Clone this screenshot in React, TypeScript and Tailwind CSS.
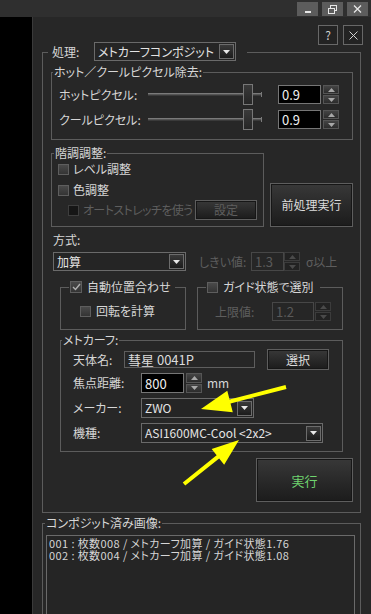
import React from "react";

// dark "StellaImage"-style composite dialog

const txt = "text-[12px] leading-[14px] text-[#d6d6d6] whitespace-nowrap";
const dim = "text-[12px] leading-[14px] text-[#5e5e5e] whitespace-nowrap";

function Group({
  head,
  corner,
  children,
  className = "",
  bodyClass = "",
  headClass = "h-[14px]",
  topClass = "h-[7px]",
}: {
  head: React.ReactNode;
  corner: string;
  children: React.ReactNode;
  className?: string;
  bodyClass?: string;
  headClass?: string;
  topClass?: string;
}) {
  return (
    <div className={`flex flex-col ${className}`}>
      <div className={`flex items-stretch ${headClass}`}>
        <div className={`flex flex-col ${corner}`}>
          <div className={topClass} />
          <div className="flex-1 border-l border-t border-[#5c5c5c]" />
        </div>
        {head}
        <div className="flex flex-1 flex-col">
          <div className={topClass} />
          <div className="flex-1 border-r border-t border-[#5c5c5c]" />
        </div>
      </div>
      <div className={`border-x border-b border-[#5c5c5c] ${bodyClass}`}>{children}</div>
    </div>
  );
}

function Check({ checked = false, disabled = false, big = false }: { checked?: boolean; disabled?: boolean; big?: boolean }) {
  return (
    <div
      className={`flex shrink-0 items-center justify-center border ${big ? "h-[12px] w-[12px]" : "h-[11px] w-[11px]"} ${
        disabled ? "border-[#3e3e3e] bg-[#161616]" : "border-[#5e5e5e] bg-gradient-to-b from-[#4a4a4a] to-[#343434]"
      }`}
    >
      {checked && (
        <svg width="9" height="8" viewBox="0 0 9 8">
          <path d="M1 4 L3.5 6.5 L8 1" stroke="#b0b0b0" strokeWidth="1.4" fill="none" />
        </svg>
      )}
    </div>
  );
}

function Tri({ up = false, color = "#e8e8e8" }: { up?: boolean; color?: string }) {
  return (
    <svg width="7" height="4" viewBox="0 0 7 4">
      <polygon points={up ? "0,4 7,4 3.5,0" : "0,0 7,0 3.5,4"} fill={color} />
    </svg>
  );
}

function Combo({ text, className }: { text: string; className: string }) {
  return (
    <div className={`flex items-center border border-[#6a6a6a] bg-[#252525] pr-[1px] ${className}`}>
      <span className="flex-1 whitespace-nowrap pl-[3px] text-[12px] leading-[16px] text-[#e4e4e4]">{text}</span>
      <div className="flex h-[15px] w-[15px] shrink-0 items-center justify-center border border-[#6c6c6c] bg-gradient-to-b from-[#3a3a3a] to-[#1c1c1c]">
        <Tri />
      </div>
    </div>
  );
}

function Spin({ disabled = false, className = "h-[19px]" }: { disabled?: boolean; className?: string }) {
  const c = disabled ? "border-[#3c3c3c] bg-[#222]" : "border-[#555] bg-gradient-to-b from-[#444] to-[#2c2c2c]";
  const t = disabled ? "#4a4a4a" : "#a8a8a8";
  return (
    <div className={`flex w-[16px] flex-col gap-[1px] ${className}`}>
      <div className={`flex flex-1 items-center justify-center border ${c}`}>
        <Tri up color={t} />
      </div>
      <div className={`flex flex-1 items-center justify-center border ${c}`}>
        <Tri color={t} />
      </div>
    </div>
  );
}

function Field({ value, className, disabled = false, black = true }: { value: string; className: string; disabled?: boolean; black?: boolean }) {
  return (
    <div
      className={`flex items-center whitespace-nowrap border pl-[3px] text-[13px] leading-[15px] ${className} ${
        disabled
          ? "border-[#474747] bg-[#262626] text-[#5a5a5a]"
          : black
          ? "border-[#767676] bg-black text-[#f0f0f0]"
          : "border-[#5e5e5e] bg-[#262626] text-[#dcdcdc]"
      }`}
    >
      {value}
    </div>
  );
}

function Btn({ children, className, tone = "text-[#dcdcdc]" }: { children: React.ReactNode; className: string; tone?: string }) {
  return (
    <div
      className={`flex shrink-0 items-center justify-center border border-[#5e5e5e] bg-gradient-to-b from-[#383838] to-[#1c1c1c] shadow-[inset_0_0_0_1px_#161616] ${tone} ${className}`}
    >
      {children}
    </div>
  );
}

function Slider() {
  return (
    <div className="relative flex h-[21px] w-[114px] items-center">
      <div className="h-[3px] flex-1 border-t border-b border-t-[#7a7a7a] border-b-[#3a3a3a] bg-[#555]" />
      <div className="h-[5px] w-[1px] self-center bg-[#7a7a7a]" />
      <div className="absolute left-[95px] top-0 h-[21px] w-[10px] border border-[#777] bg-gradient-to-b from-[#3a3a3a] to-[#262626]" />
    </div>
  );
}

function arrowPts(x1: number, y1: number, x2: number, y2: number, hl: number, hw: number, sw: number) {
  const L = Math.hypot(x2 - x1, y2 - y1);
  const ux = (x2 - x1) / L;
  const uy = (y2 - y1) / L;
  const nx = -uy;
  const ny = ux;
  const bx = x2 - ux * hl;
  const by = y2 - uy * hl;
  const p = [
    [x1 + (nx * sw) / 2, y1 + (ny * sw) / 2],
    [bx + (nx * sw) / 2, by + (ny * sw) / 2],
    [bx + (nx * hw) / 2, by + (ny * hw) / 2],
    [x2, y2],
    [bx - (nx * hw) / 2, by - (ny * hw) / 2],
    [bx - (nx * sw) / 2, by - (ny * sw) / 2],
    [x1 - (nx * sw) / 2, y1 - (ny * sw) / 2],
  ];
  return p.map((q) => q.join(",")).join(" ");
}

export default function App() {
  return (
    <div className="relative flex h-[614px] w-[371px] flex-col overflow-hidden bg-black font-['Noto_Sans_CJK_JP','Noto_Sans',sans-serif] [font-feature-settings:'palt']">
      {/* title bar */}
      <div className="flex h-[17px] shrink-0 items-start justify-end gap-[4px] bg-[#2f2f2f] pr-[3px] pt-[2px]">
        <div className="flex h-[14px] w-[21px] items-end justify-center bg-[#5c5c5c] pb-[3px]">
          <div className="h-[2px] w-[6px] bg-[#e6e6e6]" />
        </div>
        <div className="flex h-[14px] w-[21px] items-center justify-center bg-[#5c5c5c]">
          <svg width="9" height="9" viewBox="0 0 9 9">
            <rect x="2.5" y="0.5" width="6" height="5" stroke="#e6e6e6" fill="none" />
            <rect x="0.5" y="3.5" width="6" height="5" stroke="#e6e6e6" fill="#5c5c5c" />
          </svg>
        </div>
        <div className="flex h-[14px] w-[21px] items-center justify-center bg-[#5c5c5c]">
          <svg width="9" height="8" viewBox="0 0 9 8">
            <path d="M1 0.5 L8 7.5 M8 0.5 L1 7.5" stroke="#e6e6e6" strokeWidth="1.3" />
          </svg>
        </div>
      </div>

      <div className="flex flex-1">
        <div className="w-[32px] shrink-0 bg-black" />
        <div className="flex flex-1 flex-col border-l border-[#3a3a3a] bg-[#272727]">
          {/* help / close */}
          <div className="flex justify-end gap-[5px] pr-[8px] pt-[8px]">
            <div className="flex h-[20px] w-[20px] items-center justify-center border border-[#686868] bg-[#232323] text-[12px] leading-none text-[#cfcfcf]">
              ?
            </div>
            <div className="flex h-[20px] w-[20px] items-center justify-center border border-[#686868] bg-[#232323]">
              <svg width="9" height="9" viewBox="0 0 9 9">
                <path d="M0.5 0.5 L8.5 8.5 M8.5 0.5 L0.5 8.5" stroke="#cfcfcf" strokeWidth="1" />
              </svg>
            </div>
          </div>

          {/* 処理 */}
          <Group
            className="-mt-[3px] ml-[9px] mr-[10px]"
            corner="w-[6px]"
            headClass="h-[19px]"
            topClass="h-[10px]"
            bodyClass="pl-[8px] pr-[7px] pb-[10px]"
            head={
              <div className="flex items-center">
                <span className={`ml-[4px] w-[42px] ${txt}`}>処理:</span>
                <Combo text="メトカーフコンポジット" className="h-[19px] w-[142px]" />
                <div className="w-[11px]" />
              </div>
            }
          >
            {/* hot / cool */}
            <Group
              className="mt-[4px]"
              corner="w-[2px]"
              bodyClass="pl-[7px] pt-[5px] pb-[9px] flex flex-col gap-[4px]"
              head={<span className={`pl-[1px] pr-[1px] ${txt}`}>ホット／クールピクセル除去:</span>}
            >
              {["ホットピクセル:", "クールピクセル:"].map((l) => (
                <div key={l} className="flex h-[21px] items-center">
                  <span className={`w-[89px] ${txt}`}>{l}</span>
                  <Slider />
                  <Field value="0.9" className="ml-[16px] h-[19px] w-[43px]" />
                  <div className="ml-[2px]">
                    <Spin />
                  </div>
                </div>
              ))}
            </Group>

            {/* 階調調整 + 前処理実行 */}
            <div className="mt-[6px] flex items-end gap-[6px]">
              <Group
                className="w-[213px]"
                corner="w-[3px]"
                bodyClass="flex flex-col pt-[2px] pb-[6px] pl-[6px] pr-[6px]"
                head={<span className={`pl-[1px] pr-[1px] ${txt}`}>階調調整:</span>}
              >
                <div className="flex h-[14px] items-center gap-[4px]">
                  <Check />
                  <span className={txt}>レベル調整</span>
                </div>
                <div className="mt-[7px] flex h-[14px] items-center gap-[4px]">
                  <Check />
                  <span className={txt}>色調整</span>
                </div>
                <div className="mt-[3px] flex h-[20px] items-center pl-[10px]">
                  <Check disabled />
                  <span className={`ml-[4px] tracking-[-0.6px] ${dim}`}>オートストレッチを使う</span>
                  <Btn className="ml-auto h-[20px] w-[62px]" tone="text-[#5e5e5e]">
                    <span className="text-[12px] leading-none">設定</span>
                  </Btn>
                </div>
              </Group>
              <Btn className="h-[44px] w-[83px]">
                <span className="text-[12px] leading-none">前処理実行</span>
              </Btn>
            </div>

            {/* 方式 */}
            <div className="ml-[2px] mt-[6px] flex flex-col">
              <span className={txt}>方式:</span>
              <div className="mt-[5px] flex h-[19px] items-center">
                <Combo text="加算" className="h-[19px] w-[133px]" />
                <span className={`ml-[13px] w-[52px] ${dim}`}>しきい値:</span>
                <Field value="1.3" disabled className="h-[19px] w-[33px]" />
                <Spin disabled className="h-[19px]" />
                <span className={`ml-[6px] ${dim}`}>σ以上</span>
              </div>
            </div>

            {/* 自動位置合わせ / ガイド */}
            <div className="ml-[9px] mt-[9px] flex items-stretch gap-[11px]">
              <Group
                className="w-[126px]"
                corner="w-[9px]"
                bodyClass="h-[36px] pl-[19px] pt-[10px]"
                head={
                  <div className="flex items-center gap-[5px] pl-[1px] pr-[4px]">
                    <Check checked big />
                    <span className={txt}>自動位置合わせ</span>
                  </div>
                }
              >
                <div className="flex h-[14px] items-center gap-[5px]">
                  <Check />
                  <span className={txt}>回転を計算</span>
                </div>
              </Group>
              <Group
                className="w-[146px]"
                corner="w-[9px]"
                bodyClass="h-[36px] pl-[17px] pt-[8px]"
                head={
                  <div className="flex items-center gap-[5px] pl-[1px] pr-[6px]">
                    <Check />
                    <span className={txt}>ガイド状態で選別</span>
                  </div>
                }
              >
                <div className="flex h-[19px] items-center">
                  <span className={`w-[57px] ${dim}`}>上限値:</span>
                  <Field value="1.2" disabled className="h-[19px] w-[42px]" />
                  <div className="ml-[1px]">
                    <Spin disabled />
                  </div>
                </div>
              </Group>
            </div>

            {/* メトカーフ */}
            <Group
              className="ml-[9px] mt-[3px] w-[283px]"
              corner="w-[2px]"
              bodyClass="flex flex-col pl-[12px] pt-[2px] pb-[8px]"
              head={<span className={`pl-[1px] pr-[1px] ${txt}`}>メトカーフ:</span>}
            >
              <div className="flex h-[21px] items-center">
                <span className={`w-[51px] ${txt}`}>天体名:</span>
                <Field value="彗星 0041P" black={false} className="h-[17px] w-[131px] text-[12px]" />
                <Btn className="ml-[12px] h-[21px] w-[62px]">
                  <span className="text-[12px] leading-none">選択</span>
                </Btn>
              </div>
              <div className="mt-[3px] flex h-[20px] items-center">
                <span className={`w-[68px] ${txt}`}>焦点距離:</span>
                <Field value="800" className="h-[20px] w-[43px]" />
                <div className="ml-[2px]">
                  <Spin className="h-[20px]" />
                </div>
                <span className={`ml-[5px] ${txt}`}>mm</span>
              </div>
              <div className="mt-[5px] flex h-[20px] items-center">
                <span className={`w-[68px] ${txt}`}>メーカー:</span>
                <Combo text="ZWO" className="h-[20px] w-[113px]" />
              </div>
              <div className="mt-[5px] flex h-[20px] items-center">
                <span className={`w-[68px] ${txt}`}>機種:</span>
                <Combo text="ASI1600MC-Cool <2x2>" className="h-[20px] w-[182px]" />
              </div>
            </Group>

            <div className="mt-[6px] flex justify-end">
              <Btn className="h-[44px] w-[97px]" tone="text-[#6fd46f]">
                <span className="text-[13px] leading-none">実行</span>
              </Btn>
            </div>
          </Group>

          {/* コンポジット済み画像 */}
          <Group
            className="ml-[9px] mr-[10px] mt-[3px]"
            corner="w-[3px]"
            bodyClass="pl-[3px] pr-[5px] pt-[5px]"
            head={<span className={`pl-[1px] pr-[1px] ${txt}`}>コンポジット済み画像:</span>}
          >
            <div className="h-[120px] border border-[#6a6a6a] bg-[#252525] pl-[2px] pt-[1px] text-[11px] leading-[12px] tracking-[0.4px] text-[#d6d6d6]">
              <div className="whitespace-nowrap">001 : 枚数008 / メトカーフ加算 / ガイド状態1.76</div>
              <div className="whitespace-nowrap">002 : 枚数004 / メトカーフ加算 / ガイド状態1.08</div>
            </div>
          </Group>
        </div>
      </div>

      {/* yellow annotation arrows */}
      <svg className="pointer-events-none absolute left-0 top-0" width="371" height="614">
        <polygon points={arrowPts(286, 387, 201, 409, 30, 22, 4)} fill="#ffff00" />
        <polygon points={arrowPts(184, 484, 239, 440, 27, 20, 4)} fill="#ffff00" />
      </svg>
    </div>
  );
}
